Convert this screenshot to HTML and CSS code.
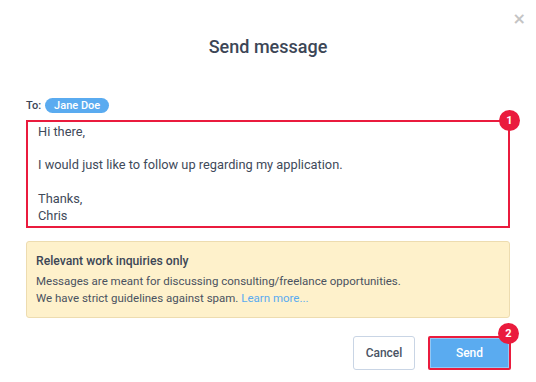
FILE: index.html
```html
<!DOCTYPE html>
<html lang="en">
<head>
    <meta charset="UTF-8">
    <title>Send message</title>
    <link rel="stylesheet" href="styles.css">
</head>
<body>
    <div class="modal">
        <button class="close-btn">&times;</button>
        <h1 class="modal-title">Send message</h1>

        <div class="to-row">
            <span class="to-label">To:</span>
            <span class="recipient">Jane Doe</span>
        </div>

        <div class="message-wrap">
            <div class="message">
                <p>Hi there,</p>
                <p>&nbsp;</p>
                <p>I would just like to follow up regarding my application.</p>
                <p>&nbsp;</p>
                <p>Thanks,</p>
                <p>Chris</p>
            </div>
            <span class="step step-1">1</span>
        </div>

        <div class="notice">
            <div class="notice-title">Relevant work inquiries only</div>
            <p>Messages are meant for discussing consulting/freelance opportunities.</p>
            <p>We have strict guidelines against spam. <a href="#">Learn more...</a></p>
        </div>

        <div class="actions">
            <button class="btn btn-cancel">Cancel</button>
            <div class="send-wrap">
                <button class="btn btn-send">Send</button>
                <span class="step step-2">2</span>
            </div>
        </div>
    </div>
</body>
</html>
```

FILE: styles.css
```css
* {
    margin: 0;
    padding: 0;
    box-sizing: border-box;
}

body {
    font-family: Roboto, 'Liberation Sans', Arial, sans-serif;
    background: white;
    color: #3f4a5a;
    width: 536px;
    height: 382px;
    overflow: hidden;
}

.modal {
    position: relative;
    padding: 36px 26px 0 26px;
}

.close-btn {
    position: absolute;
    top: 10px;
    right: 10px;
    border: none;
    background: none;
    color: #c4c4c4;
    font-size: 16px;
    font-weight: bold;
    font-family: 'DejaVu Sans', sans-serif;
    line-height: 18px;
    cursor: pointer;
}

.modal-title {
    text-align: center;
    font-size: 18px;
    font-weight: 500;
    line-height: 22px;
    color: #3c4656;
}

.to-row {
    display: flex;
    align-items: center;
    gap: 4px;
    margin-top: 39px;
    height: 16px;
}

.to-label {
    font-size: 11px;
    font-weight: 500;
    color: #3c4656;
}

.recipient {
    background: #5aabf0;
    color: white;
    font-size: 11px;
    font-weight: 500;
    line-height: 15px;
    padding: 0 9px;
    border-radius: 8px;
}

.message-wrap {
    position: relative;
    margin-top: 7px;
}

.message {
    border: 2px solid #ea1b3d;
    height: 108px;
    padding: 2px 10px;
    font-size: 12.8px;
    line-height: 16.7px;
    color: #3f4a5a;
}

.step {
    position: absolute;
    width: 21px;
    height: 21px;
    border-radius: 50%;
    background: #ea1b3d;
    color: white;
    font-size: 11px;
    font-weight: 700;
    display: flex;
    align-items: center;
    justify-content: center;
}

.step-1 {
    top: -10px;
    right: -10px;
}

.notice {
    margin-top: 13px;
    background: #fef1cb;
    border: 1px solid #eddcb0;
    border-radius: 3px;
    padding: 11px 9px 10px 9px;
    font-size: 11.5px;
    line-height: 17px;
    color: #4a5260;
}

.notice-title {
    font-size: 12.2px;
    font-weight: 500;
    color: #3c4656;
    margin-bottom: 3px;
}

.notice a {
    color: #5aabf0;
    text-decoration: none;
}

.actions {
    display: flex;
    justify-content: flex-end;
    align-items: center;
    gap: 13px;
    margin-top: 18px;
}

.btn {
    height: 34px;
    font-family: inherit;
    font-size: 12px;
    font-weight: 500;
    border-radius: 3px;
    cursor: pointer;
}

.btn-cancel {
    width: 62px;
    background: white;
    border: 1px solid #c9d5e5;
    color: #4a5464;
}

.send-wrap {
    position: relative;
    margin-right: -1px;
}

.btn-send {
    width: 83px;
    background: #5aabf0;
    border: 2px solid #ea1b3d;
    border-radius: 2px;
    color: white;
    box-shadow: inset 0 0 0 1px #ffffff55;
}

.step-2 {
    top: -13px;
    right: -8px;
}
```
